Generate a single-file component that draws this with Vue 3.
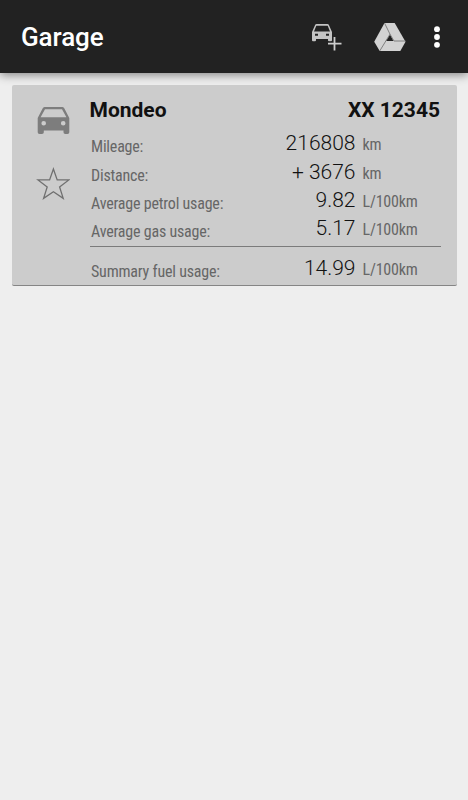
<script setup>
const car = {
    name: 'Mondeo',
    plate: 'XX 12345',
}

const rows = [
    { id: 'mileage', label: 'Mileage:', value: '216808', unit: 'km' },
    { id: 'distance', label: 'Distance:', value: '+ 3676', unit: 'km' },
    { id: 'petrol', label: 'Average petrol usage:', value: '9.82', unit: 'L/100km' },
    { id: 'gas', label: 'Average gas usage:', value: '5.17', unit: 'L/100km' },
]

const summary = { id: 'summary', label: 'Summary fuel usage:', value: '14.99', unit: 'L/100km' }
</script>

<template>
    <div class="screen">
        <header class="toolbar">
            <h1>Garage</h1>
            <button class="add" aria-label="Add car">
                <svg width="32" height="30" viewBox="0 0 32 30">
                    <path fill="#c4c4c4" fill-rule="evenodd" d="M5 3.200Q5.400 2 6.600 2H17.400Q18.600 2 19 3.200L22 10V18.300Q22 19.300 21 19.300H19Q18 19.300 18 18.300V17H6V18.300Q6 19.300 5 19.300H3Q2 19.300 2 18.300V10ZM6.300 3.800L4 9.500H20L17.700 3.800ZM5 11.700V13.700H8V11.700ZM16 11.700V13.700H19V11.700Z" />
                    <path d="M24.500 13V29M16.500 21.700H32" stroke="#222" stroke-width="4" />
                    <path d="M24.500 15V28.500M18 21.700H31.500" stroke="#cecece" stroke-width="1.800" />
                </svg>
            </button>
            <button class="drive" aria-label="Google Drive">
                <svg width="34" height="30" viewBox="0 0 34 30">
                    <path d="M11.500 1H21.700L32.500 19.700L27.300 29H6.700L1.200 19.700Z" fill="#d2d2d2" />
                    <path d="M17 12.500L20.500 19H13Z" fill="#222" />
                    <path d="M11.500 1L17 12.200L21 19H32.500M17 12.200L6.700 29" fill="none" stroke="#777" stroke-width=".9" />
                </svg>
            </button>
            <button class="more" aria-label="More options">
                <svg width="8" height="24" viewBox="0 0 8 24" fill="#fff">
                    <circle cx="4" cy="4.200" r="2.900" />
                    <circle cx="4" cy="12" r="2.900" />
                    <circle cx="4" cy="19.800" r="2.900" />
                </svg>
            </button>
        </header>

        <main>
            <section class="card">
                <div class="icons">
                    <svg width="33" height="28" viewBox="0 0 33 28">
                        <path fill="#7d7d7d" fill-rule="evenodd" d="M5.600 1.500Q6.100 0 7.600 0H25.400Q26.900 0 27.400 1.500L32.300 11V25.300Q32.300 27 30.500 27H28.300Q26.500 27 26.500 25.300V23.500H6.800V25.300Q6.800 27 5 27H2.500Q.7 27 .7 25.300V11ZM8 2.300L3.600 10.200H29.400L25 2.300ZM6.700 13.900A2.300 2.300 0 1 0 6.700 18.500A2.300 2.300 0 1 0 6.700 13.900ZM26.200 13.900A2.300 2.300 0 1 0 26.200 18.500A2.300 2.300 0 1 0 26.200 13.900Z" />
                    </svg>
                    <svg class="star" width="34" height="34" viewBox="0 0 34 34">
                        <path d="M17.400 2L21.200 12.900H32.800L23.600 19.900L27.200 31.400L17.400 24.800L7.600 31.400L11.200 19.900L2 12.900H13.600Z" fill="none" stroke="#707070" stroke-width="1.300" />
                    </svg>
                </div>
                <div class="info">
                    <div class="heading">
                        <span>{{ car.name }}</span>
                        <span>{{ car.plate }}</span>
                    </div>
                    <div v-for="row in rows" :key="row.id" class="row">
                        <span class="label">{{ row.label }}</span>
                        <span class="value">{{ row.value }}</span>
                        <span class="unit">{{ row.unit }}</span>
                    </div>
                    <div class="row summary">
                        <span class="label">{{ summary.label }}</span>
                        <span class="value">{{ summary.value }}</span>
                        <span class="unit">{{ summary.unit }}</span>
                    </div>
                </div>
            </section>
        </main>
    </div>
</template>

<style>
body {
    margin: 0;
    background: #eeeeee;
}
</style>

<style scoped>
.screen {
    min-height: 800px;
    background: #eeeeee;
    font-family: Roboto, "Liberation Sans", sans-serif;
}

.toolbar {
    height: 73px;
    box-sizing: border-box;
    padding: 0 27px 0 21px;
    display: flex;
    align-items: center;
    background: #222222;
    box-shadow: 0 2px 9px rgba(0, 0, 0, 0.45);
}

h1 {
    flex: 1;
    margin: 1px 0 0;
    font-size: 26px;
    line-height: 30px;
    font-weight: 500;
    letter-spacing: -0.1px;
    color: #ffffff;
}

button {
    padding: 0;
    border: 0;
    background: none;
    display: flex;
}

.drive {
    margin-left: 31px;
}

.more {
    margin-left: 26px;
}

main {
    padding: 12px 11px 0 12px;
}

.card {
    height: 201px;
    box-sizing: border-box;
    display: flex;
    padding: 11px 16px 0 25px;
    border-bottom: 1px solid #858585;
    border-radius: 2px;
    background: #cccccc;
}

.icons {
    width: 53px;
    flex: none;
    display: flex;
    flex-direction: column;
    padding-top: 11px;
}

.star {
    margin: 32px 0 0 -1px;
}

.info {
    flex: 1;
}

.heading {
    height: 33px;
    display: flex;
    justify-content: space-between;
    margin: 0 1px 0 -0.5px;
    font-size: 21px;
    line-height: 28px;
    font-weight: 700;
    color: #111111;
}

.row {
    height: 28.3px;
    display: grid;
    grid-template-columns: 165.5px 100px 85px;
    line-height: 28px;
}

.label,
.unit {
    font-size: 16px;
    font-family: "Roboto Condensed", Roboto, sans-serif;
    font-stretch: 75%;
    letter-spacing: -0.2px;
    color: #666666;
    white-space: nowrap;
}

.label {
    padding: 4.4px 0 0 1px;
}

.value {
    padding-top: 0.4px;
    font-size: 21px;
    font-weight: 300;
    color: #111111;
    text-align: right;
}

.unit {
    padding: 2.4px 0 0 7px;
}

.summary {
    margin-top: 4px;
    padding-top: 6.6px;
    border-top: 1px solid #7b7b7b;
}
</style>
